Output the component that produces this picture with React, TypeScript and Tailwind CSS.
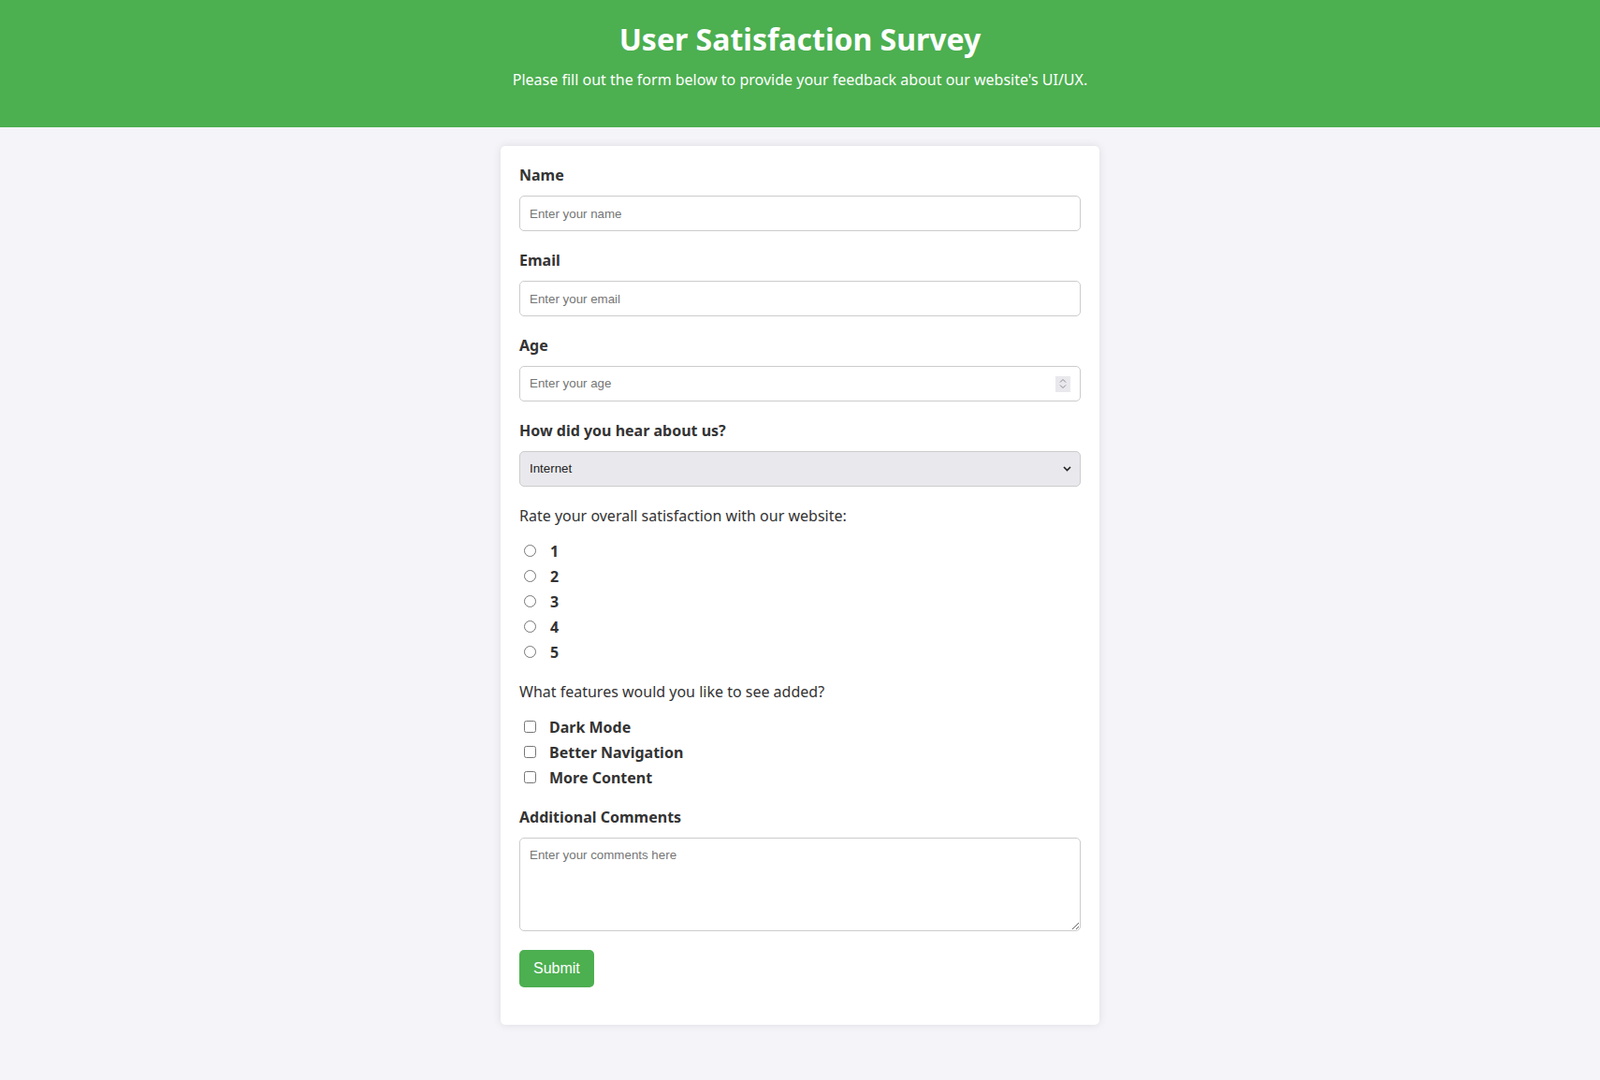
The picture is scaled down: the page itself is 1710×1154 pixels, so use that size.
import { useState } from "react";

const font = { fontFamily: '"Noto Sans", "Open Sans", sans-serif' };
const ctrlFont = { fontFamily: '"Liberation Sans", Arial, sans-serif' };

function Field({ label, children }: { label: string; children: React.ReactNode }) {
    return (
        <div className="mb-5">
            <label className="block font-bold leading-[23px] mb-[10px]">{label}</label>
            {children}
        </div>
    );
}

export default function App() {
    const [rating, setRating] = useState("");
    const [features, setFeatures] = useState<string[]>([]);

    const toggle = (f: string) =>
        setFeatures(prev => (prev.includes(f) ? prev.filter(x => x !== f) : [...prev, f]));

    const inputCls =
        "block w-full h-[38px] px-[10px] border border-[#cccccc] rounded-[5px] bg-white text-[13.33px] text-[#333] placeholder:text-[#757575] outline-none";

    return (
        <div className="min-h-screen bg-[#f4f4f9] text-[#333] pb-10" style={font}>
            {/* Header */}
            <header className="bg-[#4CAF50] text-white text-center h-[136px] pt-5">
                <h1 className="text-[32px] font-bold leading-[44px]">User Satisfaction Survey</h1>
                <p className="mt-[10px] text-base leading-[22px]">
                    Please fill out the form below to provide your feedback about our website's UI/UX.
                </p>
            </header>

            {/* Form card */}
            <form
                className="w-[640px] mx-auto mt-5 bg-white p-5 rounded-[5px] shadow-[0_0_10px_rgba(0,0,0,0.1)]"
                onSubmit={e => e.preventDefault()}
            >
                <Field label="Name">
                    <input type="text" placeholder="Enter your name" className={inputCls} style={ctrlFont} />
                </Field>

                <Field label="Email">
                    <input type="email" placeholder="Enter your email" className={inputCls} style={ctrlFont} />
                </Field>

                <Field label="Age">
                    <div className="flex items-center w-full h-[38px] pl-[10px] pr-[10px] border border-[#cccccc] rounded-[5px] bg-white">
                        <input
                            type="text"
                            placeholder="Enter your age"
                            className="flex-1 min-w-0 text-[13.33px] text-[#333] placeholder:text-[#757575] outline-none"
                            style={ctrlFont}
                        />
                        <div className="w-[16px] h-[17px] bg-[#e9e9ed] flex flex-col items-center justify-center gap-[2px]">
                            <svg width="8" height="5" viewBox="0 0 8 5" fill="none" stroke="#8a8a8a" strokeWidth="1">
                                <path d="M1 4.5 L4 1.5 L7 4.5" />
                            </svg>
                            <svg width="8" height="5" viewBox="0 0 8 5" fill="none" stroke="#8a8a8a" strokeWidth="1">
                                <path d="M1 0.5 L4 3.5 L7 0.5" />
                            </svg>
                        </div>
                    </div>
                </Field>

                <Field label="How did you hear about us?">
                    <div className="relative">
                        <select
                            defaultValue="Internet"
                            className="block w-full h-[38px] pl-[10px] pr-8 appearance-none border border-[#cccccc] rounded-[5px] bg-[#e9e9ed] text-[13.33px] text-[#222] outline-none"
                            style={ctrlFont}
                        >
                            <option>Internet</option>
                            <option>Friend</option>
                            <option>Advertisement</option>
                            <option>Other</option>
                        </select>
                        <svg
                            className="absolute right-[10px] top-[16px] pointer-events-none"
                            width="9"
                            height="6"
                            viewBox="0 0 9 6"
                            fill="none"
                            stroke="#222"
                            strokeWidth="1.6"
                        >
                            <path d="M1 1 L4.5 4.5 L8 1" />
                        </svg>
                    </div>
                </Field>

                {/* Rating */}
                <p className="leading-[22px] mt-5">Rate your overall satisfaction with our website:</p>
                <div className="mt-[13px] mb-[18px]">
                    {["1", "2", "3", "4", "5"].map(n => (
                        <label key={n} className="flex items-center h-[27px] font-bold">
                            <input
                                type="radio"
                                name="rating"
                                value={n}
                                checked={rating === n}
                                onChange={() => setRating(n)}
                                className="w-[13px] h-[13px] ml-[5px] m-0"
                            />
                            <span className="ml-[15px]">{n}</span>
                        </label>
                    ))}
                </div>

                {/* Features */}
                <p className="leading-[22px]">What features would you like to see added?</p>
                <div className="mt-[13px] mb-[18px]">
                    {["Dark Mode", "Better Navigation", "More Content"].map(f => (
                        <label key={f} className="flex items-center h-[27px] font-bold">
                            <input
                                type="checkbox"
                                checked={features.includes(f)}
                                onChange={() => toggle(f)}
                                className="w-[13px] h-[13px] ml-[5px] m-0"
                            />
                            <span className="ml-[14px]">{f}</span>
                        </label>
                    ))}
                </div>

                <Field label="Additional Comments">
                    <textarea
                        placeholder="Enter your comments here"
                        className="block w-full h-[100px] px-[10px] py-[8px] border border-[#cccccc] rounded-[5px] bg-white text-[13.33px] text-[#333] placeholder:text-[#757575] outline-none resize-y"
                        style={ctrlFont}
                    />
                </Field>

                <button
                    type="submit"
                    className="bg-[#4CAF50] text-white text-base leading-5 py-[10px] px-[15px] rounded-[5px] mb-5 hover:bg-[#45a049]"
                    style={ctrlFont}
                >
                    Submit
                </button>
            </form>
        </div>
    );
}
